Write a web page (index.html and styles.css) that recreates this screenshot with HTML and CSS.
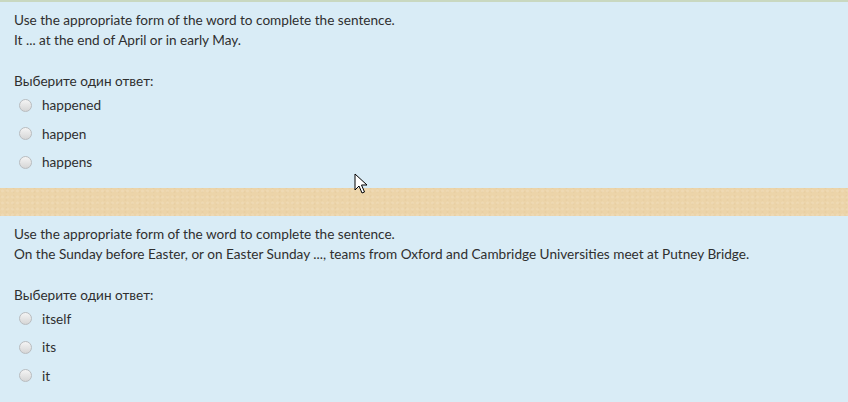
FILE: index.html
```html
<!DOCTYPE html>
<html lang="en">
<head>
    <meta charset="UTF-8">
    <title>Quiz</title>
    <link rel="stylesheet" href="styles.css">
</head>
<body>
    <div class="topStrip"></div>
    <div class="que">
        <div class="qtext">
            <p>Use the appropriate form of the word to complete the sentence.</p>
            <p>It ... at the end of April or in early May.</p>
        </div>
        <div class="prompt">Выберите один ответ:</div>
        <div class="answer">
            <label class="option"><span class="radio"></span>happened</label>
            <label class="option"><span class="radio"></span>happen</label>
            <label class="option"><span class="radio"></span>happens</label>
        </div>
    </div>
    <div class="sand"></div>
    <div class="que">
        <div class="qtext">
            <p>Use the appropriate form of the word to complete the sentence.</p>
            <p>On the Sunday before Easter, or on Easter Sunday ..., teams from Oxford and Cambridge Universities meet at Putney Bridge.</p>
        </div>
        <div class="prompt">Выберите один ответ:</div>
        <div class="answer">
            <label class="option"><span class="radio"></span>itself</label>
            <label class="option"><span class="radio"></span>its</label>
            <label class="option"><span class="radio"></span>it</label>
        </div>
    </div>
    <svg class="cursor" width="14" height="22" viewBox="0 0 14 22">
        <path d="M1 1 L1 17 L5 13 L8 20 L10.5 19 L7.5 12 L13 12 Z" fill="#fff" stroke="#000" stroke-width="1" stroke-linejoin="round"/>
    </svg>
</body>
</html>
```

FILE: styles.css
```css
body {
    margin: 0;
    padding: 0;
    font-family: Lato, "Open Sans", sans-serif;
    font-size: 13.6px;
    color: #2f2f2f;
    background-color: #d9ecf6;
    position: relative;
    overflow: hidden;
}

.topStrip {
    height: 2px;
    background-color: #c9d8c0;
}

.que {
    background-color: #d9ecf6;
    padding: 8px 14px 11px;
}

.qtext p {
    margin: 0;
    line-height: 20px;
}

.prompt {
    margin-top: 21px;
    line-height: 20px;
}

.option {
    display: flex;
    align-items: center;
    height: 28.5px;
    padding-left: 5px;
}

.radio {
    width: 11px;
    height: 11px;
    border-radius: 50%;
    border: 1px solid #b9bcbf;
    background: linear-gradient(#f4f4f4, #d6d6d6);
    margin-right: 10px;
}

.sand {
    height: 28px;
    background-color: #ecd4a9;
    background-image:
        radial-gradient(rgba(255, 255, 255, 0.12) 1px, transparent 1.5px),
        radial-gradient(rgba(190, 150, 90, 0.08) 1px, transparent 1.5px);
    background-size: 5px 6px, 7px 4px;
    background-position: 0 0, 3px 2px;
}

.cursor {
    position: absolute;
    left: 354px;
    top: 173px;
}
```
